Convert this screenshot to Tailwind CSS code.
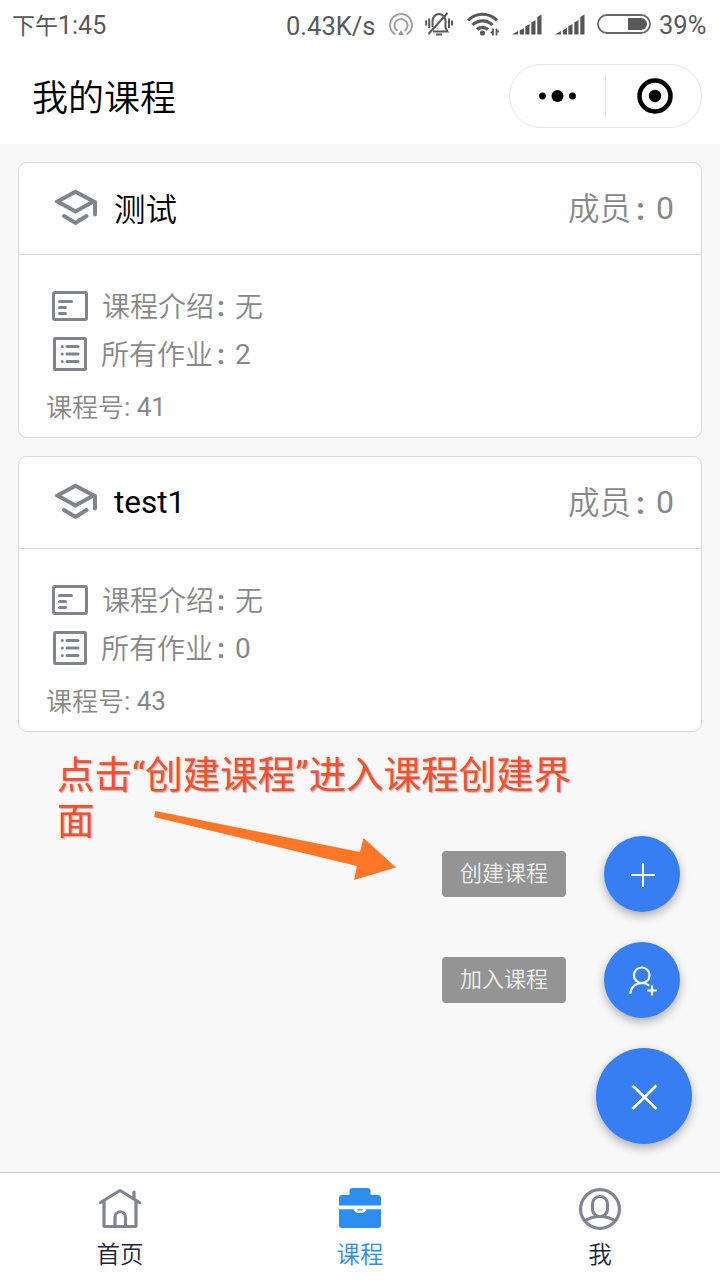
<!DOCTYPE html>
<html lang="zh-CN">
<head>
<meta charset="utf-8">
<title>我的课程</title>
<script src="https://cdn.jsdelivr.net/npm/@tailwindcss/browser@4"></script>
</head>
<body class="w-[720px] h-[1280px] overflow-hidden bg-white font-[Roboto,'Noto_Sans_CJK_SC',sans-serif]">
<svg class="hidden">
  <symbol id="cap" viewBox="0 0 42 38"><g fill="none" stroke="#80848f" stroke-width="4" stroke-linejoin="round" stroke-linecap="round"><path d="M2.500 12.500 20.500 2.800 38.500 12.500 20.500 22.500Z" stroke-linejoin="miter"/><path d="M37 12l3 2.200V25.500M9 27l11.500 7 11-7" stroke-linejoin="miter"/></g></symbol>
  <symbol id="intro" viewBox="0 0 36 30"><g fill="none" stroke="#80848f" stroke-width="3" stroke-linecap="round"><rect x="1.500" y="1.500" width="33" height="27" rx="1.500"/><path d="M7.500 10.500h12M7.500 16.500h6M7.500 22.500h6"/></g></symbol>
  <symbol id="list" viewBox="0 0 34 34"><g fill="none" stroke="#80848f" stroke-width="3" stroke-linecap="round"><rect x="1.500" y="1.500" width="31" height="31" rx="1"/><path d="M14 9.500h11M14 17h11M14 24.500h11M9.200 9.500h.1M9.200 17h.1M9.200 24.500h.1"/></g></symbol>
  <symbol id="signal" viewBox="0 0 30 21"><path d="M0 20.500 6 17v3.500zM7.800 16.500l4.200-2.500v6.500H7.800zM13.300 12.500l4.200-2.500v10.500h-4.200zM19.300 8.500l4.200-2.500v14.500h-4.200zM25.300 3l4.200-2.500v20h-4.200z" fill="#555"/></symbol>
</svg>

<div class="flex h-[50px] items-center pl-3 text-[26px] leading-[50px] text-[#595959]">
  <div class="w-[274px] whitespace-nowrap pt-0.5"><span class="text-[23px]">下午</span><span class="text-[25px]">1:45</span></div>
  <div class="w-[103px] whitespace-nowrap pt-0.5 text-[25.5px]">0.43K/s</div>
  <svg class="h-6 w-6 shrink-0" viewBox="0 0 24 24" fill="none" stroke="#a3a3a3" stroke-width="2"><path d="M6.500 21.500a11 11 0 1 1 11 0M8.500 18a6.500 6.500 0 1 1 7 0"/><path d="M12 17l3 5H9z" fill="#999" stroke="none"/></svg>
  <svg class="mb-0.5 ml-3 h-6 w-7 shrink-0" viewBox="0 0 28 24" fill="none" stroke="#595959" stroke-width="2"><path d="M8 19.500h14.500l-2-4V9c0-4-3-7-6.500-7S7.500 5 7.500 9v6M22.500 1 3.500 22"/><path d="M11 22.500h6M1.200 8.500v5M4.200 6.500v9.500M24 6.500v9.500M27 8.500v5"/></svg>
  <svg class="mb-0.5 ml-[14px] h-6 w-8 shrink-0" viewBox="0 0 32 24" fill="none" stroke="#595959" stroke-width="3.200"><path d="M1 8.500a20 20 0 0 1 29 0M5.500 13a14 14 0 0 1 20 0M10 17.500a8 8 0 0 1 11 0"/><circle cx="15.500" cy="21" r="2.600" fill="#595959" stroke="none"/><path d="M26 16.500v7M29.500 16.500v7M23.500 20.500h2.500M29.500 19.500h2.500" stroke-width="1.800"/></svg>
  <svg class="mb-0.5 ml-[13px] h-[21px] w-[30px] shrink-0"><use href="#signal"/></svg>
  <svg class="mb-0.5 ml-[13px] h-[21px] w-[30px] shrink-0"><use href="#signal"/></svg>
  <svg class="mb-0.5 ml-3 h-5 w-[54px] shrink-0" viewBox="0 0 54 20"><rect x="1" y="1" width="52" height="18" rx="9" fill="none" stroke="#666" stroke-width="1.800"/><path d="M31 4h13a6 6 0 0 1 0 12H31z" fill="#595959"/></svg>
  <div class="ml-2 whitespace-nowrap text-[25.5px]">39%</div>
</div>

<header class="flex h-[94px] items-start justify-between pr-[18px] pl-8 pt-[14px]">
  <h1 class="pt-[3px] text-[36px] leading-[64px] font-[350] text-black">我的课程</h1>
  <div class="flex h-16 w-[193px] items-center rounded-full border border-[#e6e6e6]">
    <svg class="h-16 w-[95px]" viewBox="0 0 95 64"><circle cx="32.500" cy="32" r="3.400"/><circle cx="47.500" cy="32" r="6"/><circle cx="62.500" cy="32" r="3.400"/></svg>
    <div class="h-[38px] w-px bg-[#ddd]"></div>
    <svg class="h-16 w-[95px]" viewBox="0 0 95 64"><circle cx="49" cy="32" r="15.500" fill="none" stroke="#000" stroke-width="4.500"/><circle cx="49" cy="32" r="6.200"/></svg>
  </div>
</header>

<main class="relative flex h-[1028px] flex-col gap-[18px] bg-[#f8f8f8] px-[18px] pt-[18px] text-[#888]">
  <section class="h-[276px] rounded-[9px] border border-[#d8d8d8] bg-white">
    <div class="flex h-[92px] items-center border-b border-[#d8d8d8] pr-[27px] pl-9">
      <svg class="mb-px h-[38px] w-[42px]"><use href="#cap"/></svg>
      <h2 class="ml-[17px] flex-1 pt-1 text-[31.500px] font-[350] text-black">测试</h2>
      <div class="flex text-[32px] leading-[92px]"><span class="pt-0.5 text-[31.500px] font-[350]">成员</span><span class="w-[25px] pt-px pl-[5px] font-bold">:</span><span>0</span></div>
    </div>
    <div class="flex flex-col pt-[27px] text-[28px] leading-[48px]">
      <div class="flex h-12 items-center pl-[33px]"><svg class="h-[30px] w-9"><use href="#intro"/></svg><span class="ml-[14px] pt-1 font-[350]">课程介绍</span><span class="w-[21px] pt-0.5 pl-[3px] font-bold">:</span><span class="pt-1 font-[350]">无</span></div>
      <div class="flex h-12 items-center pl-[34px]"><svg class="h-[34px] w-[34px]"><use href="#list"/></svg><span class="ml-[14px] pt-1 font-[350]">所有作业</span><span class="w-[22px] pt-0.5 pl-1 font-bold">:</span><span class="pt-0.5">2</span></div>
      <div class="mt-1 flex pl-[27px] text-[26px] leading-[50px]"><span class="pt-px font-[350]">课程号</span><span class="whitespace-pre">: 41</span></div>
    </div>
  </section>
  <section class="h-[276px] rounded-[9px] border border-[#d8d8d8] bg-white">
    <div class="flex h-[92px] items-center border-b border-[#d8d8d8] pr-[27px] pl-9">
      <svg class="mb-px h-[38px] w-[42px]"><use href="#cap"/></svg>
      <h2 class="ml-[17px] flex-1 text-[31.500px] text-black">test1</h2>
      <div class="flex text-[32px] leading-[92px]"><span class="pt-0.5 text-[31.500px] font-[350]">成员</span><span class="w-[25px] pt-px pl-[5px] font-bold">:</span><span>0</span></div>
    </div>
    <div class="flex flex-col pt-[27px] text-[28px] leading-[48px]">
      <div class="flex h-12 items-center pl-[33px]"><svg class="h-[30px] w-9"><use href="#intro"/></svg><span class="ml-[14px] pt-1 font-[350]">课程介绍</span><span class="w-[21px] pt-0.5 pl-[3px] font-bold">:</span><span class="pt-1 font-[350]">无</span></div>
      <div class="flex h-12 items-center pl-[34px]"><svg class="h-[34px] w-[34px]"><use href="#list"/></svg><span class="ml-[14px] pt-1 font-[350]">所有作业</span><span class="w-[22px] pt-0.5 pl-1 font-bold">:</span><span class="pt-0.5">0</span></div>
      <div class="mt-1 flex pl-[27px] text-[26px] leading-[50px]"><span class="pt-px font-[350]">课程号</span><span class="whitespace-pre">: 43</span></div>
    </div>
  </section>

  <!-- Annotation over the page -->
  <p class="absolute top-[608px] left-[57px] w-[530px] text-[37.500px] leading-[46px] text-[#f2502f] [text-shadow:1px_1px_2px_rgba(0,0,0,.35)]">点击“创建课程”进入课程创建界<br>面</p>
  <svg class="absolute top-[656px] left-[150px] h-[90px] w-[250px]" viewBox="150 800 250 90"><path d="M155.500 811 360 852 363.500 838 396 867.500 354 880 357 866 154 817Z" fill="#ff7626"/></svg>

  <!-- Floating actions -->
  <div class="absolute right-7 bottom-7 flex flex-col items-end gap-[30px]">
    <div class="mr-3 flex items-center gap-[38px]">
      <div class="h-[46px] w-[124px] rounded-[4px] bg-[#949494] text-center text-[22px] leading-[46px] font-[350] text-[#eee]">创建课程</div>
      <div class="h-[76px] w-[76px] rounded-full bg-[#377ef3] shadow-[0_4px_10px_rgba(0,0,0,.3)]"><svg viewBox="0 0 76 76" fill="none" stroke="#fff" stroke-width="2"><path d="M27 39h24M39 27v24"/></svg></div>
    </div>
    <div class="mr-3 flex items-center gap-[38px]">
      <div class="h-[46px] w-[124px] rounded-[4px] bg-[#949494] text-center text-[22px] leading-[46px] font-[350] text-[#eee]">加入课程</div>
      <div class="h-[76px] w-[76px] rounded-full bg-[#377ef3] shadow-[0_4px_10px_rgba(0,0,0,.3)]"><svg viewBox="0 0 76 76" fill="none" stroke="#fff" stroke-width="2.200"><circle cx="37.700" cy="33.300" r="7.800"/><path d="M26.300 52c.3-6.500 5-11 11.400-11 3 0 5.500 1 7.500 2.600M43 48.500h10M48 43.500v10"/></svg></div>
    </div>
    <div class="h-24 w-24 rounded-full bg-[#377ef3] shadow-[0_4px_10px_rgba(0,0,0,.3)]"><svg viewBox="0 0 96 96" fill="none" stroke="#fff" stroke-width="2.600"><path d="M36.500 37.500l24 23.500M60.500 37.500l-24 23.500"/></svg></div>
  </div>
</main>

<nav class="grid h-[108px] grid-cols-3 border-t border-[#ccc] bg-white text-[23.500px] leading-[34px] font-[350] text-[#1c2438]">
  <div class="flex flex-col items-center pt-[14px]">
    <svg class="h-[44px] w-[44px]" viewBox="0 0 44 44" fill="none" stroke="#80848f" stroke-width="3.200" stroke-linecap="round" stroke-linejoin="round"><path d="M2.500 15.500 22 3.500l19.500 12M6 14v24.500q0 1 1 1h30q1 0 1-1V14M17 39V30a5 5 0 0 1 10.500 0v9M36 11V5"/></svg>
    <span class="mt-[7px]">首页</span>
  </div>
  <div class="flex flex-col items-center pt-[14px] text-[#2d8cf0]">
    <svg class="h-[44px] w-[44px]" viewBox="0 0 44 44"><path d="M1 18.500V11q0-3 3-3h7.500V4q0-3 3-3h15q3 0 3 3v4H40q3 0 3 3v7.500zM1 22.200h14.500a6.800 5.500 0 0 0 13 0H43V38q0 3-3 3H4q-3 0-3-3z" fill="#2d8cf0"/><path d="M19 22.200h6q-1 1.600-3 1.600t-3-1.600" fill="#2d8cf0"/></svg>
    <span class="mt-[7px]">课程</span>
  </div>
  <div class="flex flex-col items-center pt-[14px]">
    <svg class="h-[44px] w-[44px]" viewBox="0 0 44 44" fill="none" stroke="#80848f" stroke-width="3.200"><circle cx="22" cy="22" r="19.400"/><rect x="14.500" y="9.500" width="15" height="20" rx="7.300"/><path d="M7.500 33.500C13 30 18 29.500 22 29.500s9 .5 14.500 4"/></svg>
    <span class="mt-[7px]">我</span>
  </div>
</nav>
</body>
</html>
